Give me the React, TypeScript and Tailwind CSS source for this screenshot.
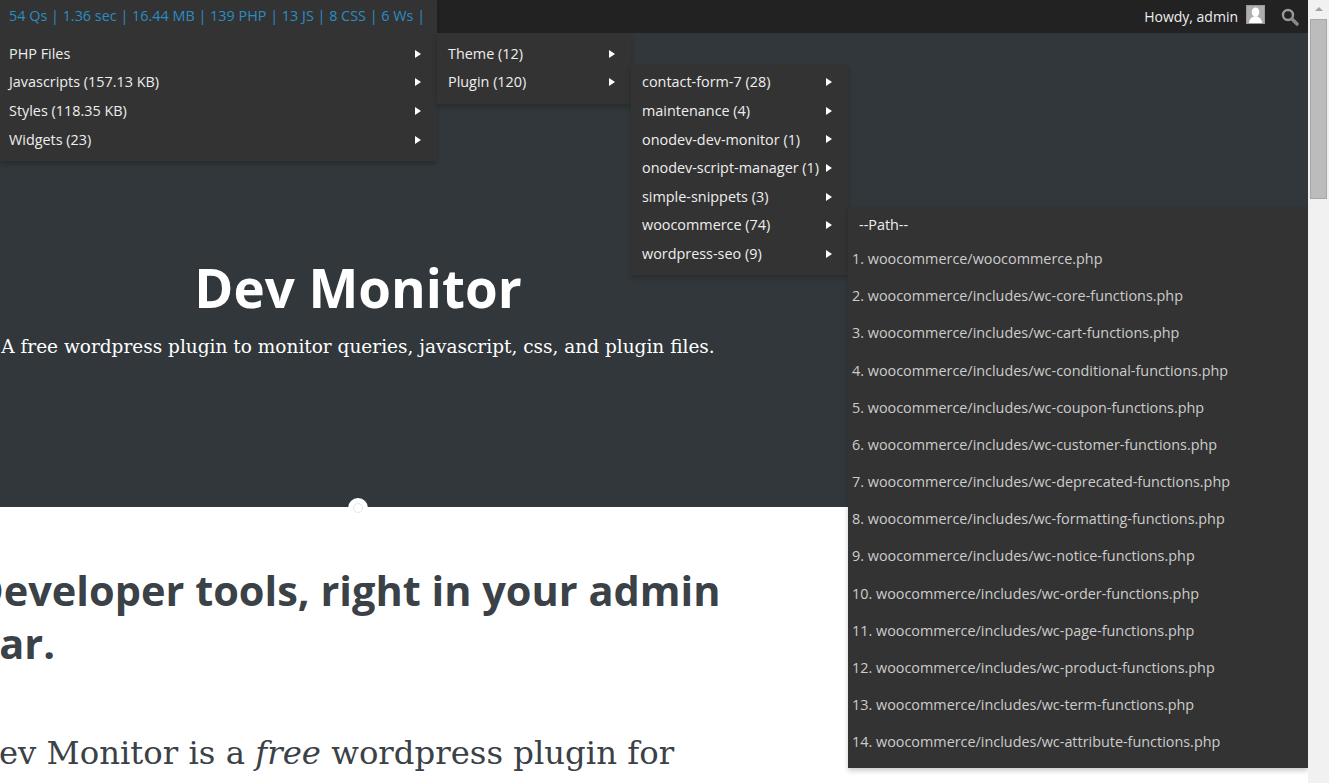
import React from 'react';

const sans = 'font-["Open_Sans","Noto_Sans",sans-serif]';

const topItems = ['PHP Files', 'Javascripts (157.13 KB)', 'Styles (118.35 KB)', 'Widgets (23)'];
const sourceItems = ['Theme (12)', 'Plugin (120)'];
const pluginItems = [
  'contact-form-7 (28)',
  'maintenance (4)',
  'onodev-dev-monitor (1)',
  'onodev-script-manager (1)',
  'simple-snippets (3)',
  'woocommerce (74)',
  'wordpress-seo (9)',
];
const paths = [
  'woocommerce/woocommerce.php',
  'woocommerce/includes/wc-core-functions.php',
  'woocommerce/includes/wc-cart-functions.php',
  'woocommerce/includes/wc-conditional-functions.php',
  'woocommerce/includes/wc-coupon-functions.php',
  'woocommerce/includes/wc-customer-functions.php',
  'woocommerce/includes/wc-deprecated-functions.php',
  'woocommerce/includes/wc-formatting-functions.php',
  'woocommerce/includes/wc-notice-functions.php',
  'woocommerce/includes/wc-order-functions.php',
  'woocommerce/includes/wc-page-functions.php',
  'woocommerce/includes/wc-product-functions.php',
  'woocommerce/includes/wc-term-functions.php',
  'woocommerce/includes/wc-attribute-functions.php',
];

const MenuRow: React.FC<{ label: string }> = ({ label }) => (
  <div className="flex h-[28.67px] items-center justify-between whitespace-nowrap pr-[16px] pl-[9px] text-[14.4px] text-[#eeeeee]">
    <span>{label}</span>
    <span className="h-0 w-0 border-y-[4px] border-l-[6px] border-y-transparent border-l-white" />
  </div>
);

const App: React.FC = () => {
  return (
    <div className={`flex h-screen w-full overflow-hidden bg-white ${sans}`}>
      <div className="relative h-full w-[1308px] shrink-0 overflow-hidden">
        {/* Admin bar */}
        <header className="flex h-[33px] items-center justify-end bg-[#222222] pr-[9px]">
          <span className="pb-[1px] text-[14px] text-[#eeeeee]">Howdy, admin</span>
          <span className="mt-[5px] ml-[8px] flex h-[19px] w-[19px] items-end justify-center self-start overflow-hidden border border-[#999999] bg-[#aeaeae]">
            <svg width="17" height="17" viewBox="0 0 18 18" fill="#ffffff">
              <ellipse cx="9" cy="6.500" rx="4" ry="5" />
              <path d="M2 18c.4-4 2.400-6 5-7h4c2.600 1 4.600 3 5 7z" />
            </svg>
          </span>
          <svg className="ml-[16px]" width="18" height="18" viewBox="0 0 18 18" fill="none">
            <circle cx="7" cy="7" r="5" stroke="#9a9a9a" strokeWidth="2.4" />
            <path d="M11 11 16 16" stroke="#8a8a8a" strokeWidth="3.4" strokeLinecap="round" />
          </svg>
        </header>

        {/* Hero */}
        <section className="relative flex h-[474px] flex-col items-center bg-[#31373a] text-white">
          <div className="ml-[-592px] flex w-[770px] flex-col items-center">
            <h1 className="mt-[222px] text-[52.9px] leading-[64px] font-bold">Dev Monitor</h1>
            <p className='mt-[13px] font-["DejaVu_Serif",serif] text-[18.5px] leading-[30px] whitespace-nowrap'>
              A free wordpress plugin to monitor queries, javascript, css, and plugin files.
            </p>
          </div>
          <span className="absolute bottom-[-11px] left-[348px] flex h-[20px] w-[20px] items-center justify-center rounded-full bg-white">
            <span className="h-[10px] w-[10px] rounded-full border border-[#e4e9ec]" />
          </span>
        </section>

        {/* Content */}
        <section className="ml-[-27px] w-[770px] bg-white text-[#3a4147]">
          <h2 className="mt-[57px] text-[41.5px] leading-[53px] font-bold">
            Developer tools, right in your admin bar.
          </h2>
          <p className='mt-[58px] font-["DejaVu_Serif",serif] text-[32.35px] leading-[50px] whitespace-nowrap'>
            Dev Monitor is a <em>free</em> wordpress plugin for
          </p>
        </section>

        {/* Dev monitor menus */}
        <div className="absolute top-0 left-0 w-[437px] bg-[#333333] pb-[7px] shadow-[0_3px_5px_rgba(0,0,0,0.2)]">
          <div className="flex h-[33px] items-center pb-[1px] pl-[9px] text-[14.4px] whitespace-nowrap text-[#2b8cc4]">
            54 Qs | 1.36 sec | 16.44 MB | 139 PHP | 13 JS | 8 CSS | 6 Ws |
          </div>
          <div className="pt-[6.250px]">
            {topItems.map((item) => (
              <MenuRow key={item} label={item} />
            ))}
          </div>
        </div>

        <div className="absolute top-[33px] left-[437px] w-[194px] bg-[#333333] pt-[6.250px] pb-[7px] shadow-[0_3px_5px_rgba(0,0,0,0.2)]">
          {sourceItems.map((item) => (
            <div key={item} className="pl-[2px]">
              <MenuRow label={item} />
            </div>
          ))}
        </div>

        <div className="absolute top-[64px] left-[631px] w-[217px] bg-[#333333] pt-[3.700px] pb-[7px] shadow-[0_3px_5px_rgba(0,0,0,0.2)]">
          {pluginItems.map((item) => (
            <div key={item} className="pl-[2px]">
              <MenuRow label={item} />
            </div>
          ))}
        </div>

        <div className="absolute top-[207px] left-[848px] w-[460px] bg-[#333333] pb-[7px] text-[14.4px] text-[#cccccc] shadow-[0_3px_5px_rgba(0,0,0,0.2)]">
          <div className="flex h-[33.2px] items-center pt-[2px] pl-[11px] text-[#eeeeee]">--Path--</div>
          {paths.map((path, i) => (
            <div key={path} className="flex h-[37.2px] items-center pl-[4px] whitespace-nowrap">
              {i + 1}. {path}
            </div>
          ))}
        </div>
      </div>

      {/* Scrollbar */}
      <div className="flex h-full w-[21px] shrink-0 flex-col items-center bg-[#f1f1f1]">
        <span className="mt-[7px] h-0 w-0 border-x-[4px] border-b-[4px] border-x-transparent border-b-[#a3a3a3]" />
        <span className="mt-[8px] h-[180px] w-[17px] border border-[#a8a8a8] bg-[#bcbcbc]" />
      </div>
    </div>
  );
};

export default App;
